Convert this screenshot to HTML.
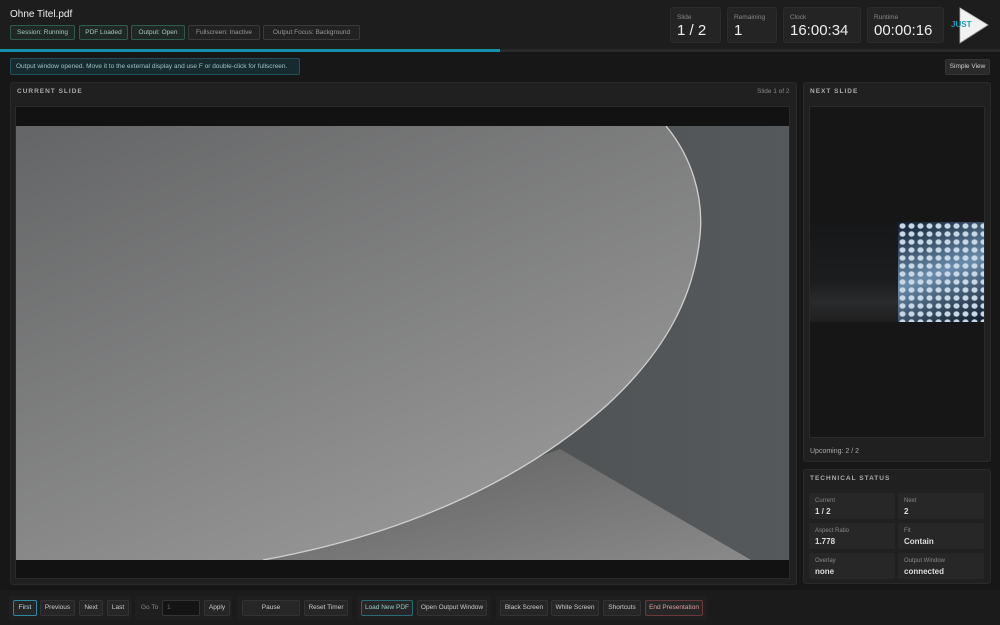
<!DOCTYPE html>
<html><head><meta charset="utf-8"><style>
*{box-sizing:border-box;margin:0;padding:0}
body{width:1000px;height:625px;overflow:hidden;background:#171717;font-family:"Liberation Sans",sans-serif;color:#ddd;position:relative}
.abs{position:absolute}
.hdr{left:0;top:0;width:1000px;height:49px;background:#1d1d1d}
.badge{position:absolute;top:25px;height:15px;font-size:6.5px;line-height:13px;padding:0;text-align:center;white-space:nowrap;border:1px solid #3a3a3a;border-radius:2px;color:#999;background:#222}
.badge.g{border-color:#2f5a50;color:#a8c8c0;background:#1f2824}
.stat{position:absolute;top:7px;height:36px;background:#242424;border:1px solid #2c2c2c;border-radius:3px}
.stat .l{position:absolute;left:6px;top:6px;font-size:6.5px;color:#888}
.stat .v{position:absolute;left:6px;top:14px;font-size:15px;color:#eee}
.panel{background:#202020;border:1px solid #2a2a2a;border-radius:3px}
.ptitle{position:absolute;font-size:6.5px;letter-spacing:1px;font-weight:bold;color:#aaa}
.btn{position:absolute;top:600px;height:16px;font-size:6.5px;line-height:14px;text-align:center;white-space:nowrap;border:1px solid #333;border-radius:2px;background:#262626;color:#ccc}
.grp{position:absolute;top:596px;height:24px;background:#1f1f1f;border-radius:2px}
.tc{position:absolute;width:86px;height:26px;background:#272727;border-radius:2px}
.tc .l{position:absolute;left:6px;top:5px;font-size:6px;color:#888}
.tc .v{position:absolute;left:6px;top:14px;font-size:8px;font-weight:bold;color:#ddd}
</style></head><body>
<div class="abs hdr"></div>
<div class="abs" style="left:10px;top:9px;font-size:10px;color:#eee">Ohne Titel.pdf</div>
<div class="badge g" style="left:10px;width:65px">Session: Running</div>
<div class="badge g" style="left:79px;width:49px">PDF Loaded</div>
<div class="badge g" style="left:131px;width:54px">Output: Open</div>
<div class="badge" style="left:188px;width:72px">Fullscreen: Inactive</div>
<div class="badge" style="left:263px;width:97px">Output Focus: Background</div>
<div class="stat" style="left:670px;width:51px"><div class="l">Slide</div><div class="v">1 / 2</div></div>
<div class="stat" style="left:727px;width:50px"><div class="l">Remaining</div><div class="v">1</div></div>
<div class="stat" style="left:783px;width:78px"><div class="l">Clock</div><div class="v">16:00:34</div></div>
<div class="stat" style="left:867px;width:77px"><div class="l">Runtime</div><div class="v">00:00:16</div></div>
<svg class="abs" style="left:948px;top:6px" width="42" height="38"><polygon points="12,2 40,19 12,37" fill="#f2f2f2" stroke="#bbb" stroke-width="0.8"/><line x1="12" y1="37" x2="40" y2="19" stroke="#888" stroke-width="0.6"/><text x="3" y="21" font-size="8" font-weight="bold" fill="#1a9ab0" font-family="Liberation Sans">JUST</text></svg>
<div class="abs" style="left:0;top:49px;width:1000px;height:3px;background:#2a2a2a"></div>
<div class="abs" style="left:0;top:49px;width:500px;height:3px;background:#1590a8"></div>
<div class="abs" style="left:10px;top:58px;width:290px;height:17px;border:1px solid #21525c;background:#172a2e;border-radius:2px;font-size:6.5px;line-height:15px;padding-left:5px;color:#9fc0c6;white-space:nowrap">Output window opened. Move it to the external display and use F or double-click for fullscreen.</div>
<div class="abs" style="left:945px;top:59px;width:45px;height:16px;background:#2a2a2a;border:1px solid #353535;border-radius:2px;font-size:6.5px;line-height:14px;text-align:center;color:#ccc">Simple View</div>

<div class="abs panel" style="left:10px;top:82px;width:787px;height:503px"></div>
<div class="ptitle" style="left:17px;top:88px">CURRENT SLIDE</div>
<div class="abs" style="left:757px;top:88px;font-size:6.5px;color:#888">Slide 1 of 2</div>
<div class="abs" style="left:15px;top:106px;width:775px;height:473px;background:#121212;border:1px solid #2a2a2a"></div>
<svg class="abs" style="left:16px;top:126px" width="773" height="434" viewBox="0 0 773 434">
<defs>
<linearGradient id="a" x1="0" y1="0" x2="0.7" y2="1"><stop offset="0" stop-color="#646566"/><stop offset="1" stop-color="#9a9a9a"/></linearGradient>
<linearGradient id="r" x1="0" y1="0" x2="1" y2="0"><stop offset="0" stop-color="#454748"/><stop offset="1" stop-color="#55595b"/></linearGradient>
<linearGradient id="f" x1="0" y1="0" x2="1" y2="1"><stop offset="0" stop-color="#5e5e5e"/><stop offset="1" stop-color="#8a8a8a"/></linearGradient>
</defs>
<rect width="773" height="434" fill="url(#r)"/>
<path d="M544,323 L735,434 L247,434 Z" fill="url(#f)"/>
<path d="M0,0 L650,0 C675,30 688,70 684,110 C678,170 650,225 590,280 C500,360 380,410 247,434 L0,434 Z" fill="url(#a)"/>
<path d="M650,0 C675,30 688,70 684,110 C678,170 650,225 590,280 C500,360 380,410 247,434" fill="none" stroke="#d0d0d0" stroke-width="1.3"/>
</svg>

<div class="abs panel" style="left:803px;top:82px;width:188px;height:380px"></div>
<div class="ptitle" style="left:810px;top:88px">NEXT SLIDE</div>
<div class="abs" style="left:809px;top:106px;width:176px;height:332px;background:#161616;border:1px solid #2a2a2a"></div>
<div class="abs" style="left:810px;top:222px;width:174px;height:100px;background:linear-gradient(180deg,#161718,#1c1d1e 60%,#2a2b2c 80%,#1e1e1e)"></div>
<div class="abs" style="left:898px;top:222px;width:86px;height:100px;background:radial-gradient(ellipse at 50% 50%,#c8d8e6 0 2.5px,transparent 3.5px) 0 0/9px 8px,linear-gradient(160deg,#0e1e30,#6a8cac 50%,#0e1a28)"></div>
<div class="abs" style="left:810px;top:448px;font-size:7px;color:#aaa">Upcoming: 2 / 2</div>

<div class="abs panel" style="left:803px;top:469px;width:188px;height:115px"></div>
<div class="ptitle" style="left:810px;top:475px">TECHNICAL STATUS</div>
<div class="tc" style="left:809px;top:493px"><div class="l">Current</div><div class="v">1 / 2</div></div>
<div class="tc" style="left:898px;top:493px"><div class="l">Next</div><div class="v">2</div></div>
<div class="tc" style="left:809px;top:523px"><div class="l">Aspect Ratio</div><div class="v">1.778</div></div>
<div class="tc" style="left:898px;top:523px"><div class="l">Fit</div><div class="v">Contain</div></div>
<div class="tc" style="left:809px;top:553px"><div class="l">Overlay</div><div class="v">none</div></div>
<div class="tc" style="left:898px;top:553px"><div class="l">Output Window</div><div class="v">connected</div></div>

<div class="abs" style="left:0;top:590px;width:1000px;height:35px;background:#1b1b1b"></div>
<div class="grp" style="left:9px;width:123px"></div>
<div class="grp" style="left:135px;width:97px"></div>
<div class="grp" style="left:237px;width:115px"></div>
<div class="grp" style="left:357px;width:134px"></div>
<div class="grp" style="left:496px;width:211px"></div>
<div class="btn" style="left:13px;width:24px;border-color:#2a8aa0;color:#bde">First</div>
<div class="btn" style="left:40px;width:35px">Previous</div>
<div class="btn" style="left:79px;width:24px">Next</div>
<div class="btn" style="left:107px;width:22px">Last</div>
<div class="abs" style="left:141px;top:604px;font-size:6.5px;color:#888">Go To</div>
<div class="btn" style="left:162px;width:38px;background:#141414;text-align:left;padding-left:4px;color:#666">1</div>
<div class="btn" style="left:204px;width:26px">Apply</div>
<div class="btn" style="left:242px;width:58px">Pause</div>
<div class="btn" style="left:304px;width:44px">Reset Timer</div>
<div class="btn" style="left:361px;width:52px;border-color:#2a6a78;color:#9cc">Load New PDF</div>
<div class="btn" style="left:417px;width:70px">Open Output Window</div>
<div class="btn" style="left:500px;width:48px">Black Screen</div>
<div class="btn" style="left:551px;width:48px">White Screen</div>
<div class="btn" style="left:603px;width:38px">Shortcuts</div>
<div class="btn" style="left:645px;width:58px;border-color:#6a3a3a;color:#d9a0a0">End Presentation</div>
</body></html>
